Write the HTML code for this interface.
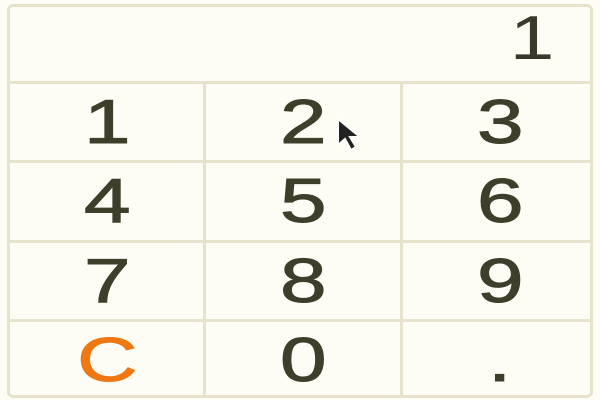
<!DOCTYPE html>
<html><head><style>
html,body{margin:0;padding:0;width:600px;height:400px;background:#fdfdf6;overflow:hidden}
.box{position:absolute;left:7px;top:4px;width:580px;height:388px;border:3px solid #e6e2cc;border-radius:6px;background:#fdfdf6}
.disp{position:absolute;left:0;top:0;width:580px;height:74px;border-bottom:3px solid #e6e2cc;font:62px "Liberation Sans",sans-serif;color:#3a3a2c}
.disp span{position:absolute;right:36px;top:-4px;display:inline-block;transform:scaleX(1.3);transform-origin:right}
.k{position:absolute;width:194px;height:77px;display:flex;align-items:center;justify-content:center;font:62px "Liberation Sans",sans-serif;color:#3e3e2a;box-sizing:border-box;-webkit-text-stroke:1px currentColor}
.k span{display:inline-block;transform:scaleX(1.35)}
.vl{position:absolute;top:77px;width:3px;height:311px;background:#e6e2cc}
.hl{position:absolute;left:0;width:580px;height:3px;background:#e6e2cc}
</style></head><body>
<div class="box">
<div class="disp"><span>1</span></div>
<div class="vl" style="left:193px"></div>
<div class="vl" style="left:390px"></div>
<div class="hl" style="top:153px"></div>
<div class="hl" style="top:233px"></div>
<div class="hl" style="top:312px"></div>
<div class="k" style="left:0;top:77px"><span>1</span></div>
<div class="k" style="left:196px;top:77px"><span>2</span></div>
<div class="k" style="left:393px;top:77px"><span>3</span></div>
<div class="k" style="left:0;top:156px"><span>4</span></div>
<div class="k" style="left:196px;top:156px"><span>5</span></div>
<div class="k" style="left:393px;top:156px"><span>6</span></div>
<div class="k" style="left:0;top:236px"><span>7</span></div>
<div class="k" style="left:196px;top:236px"><span>8</span></div>
<div class="k" style="left:393px;top:236px"><span>9</span></div>
<div class="k" style="left:0;top:315px;color:#f07812"><span>C</span></div>
<div class="k" style="left:196px;top:315px"><span>0</span></div>
<div class="k" style="left:393px;top:315px"><span>.</span></div>
</div>
<svg style="position:absolute;left:336px;top:117px" width="32" height="36" viewBox="0 0 32 36"><path d="M2 2 L2 28 L9 22 L15 33 L20 30 L14 20 L24 20 Z" fill="#222" stroke="#fff" stroke-width="2"/></svg>
</body></html>
